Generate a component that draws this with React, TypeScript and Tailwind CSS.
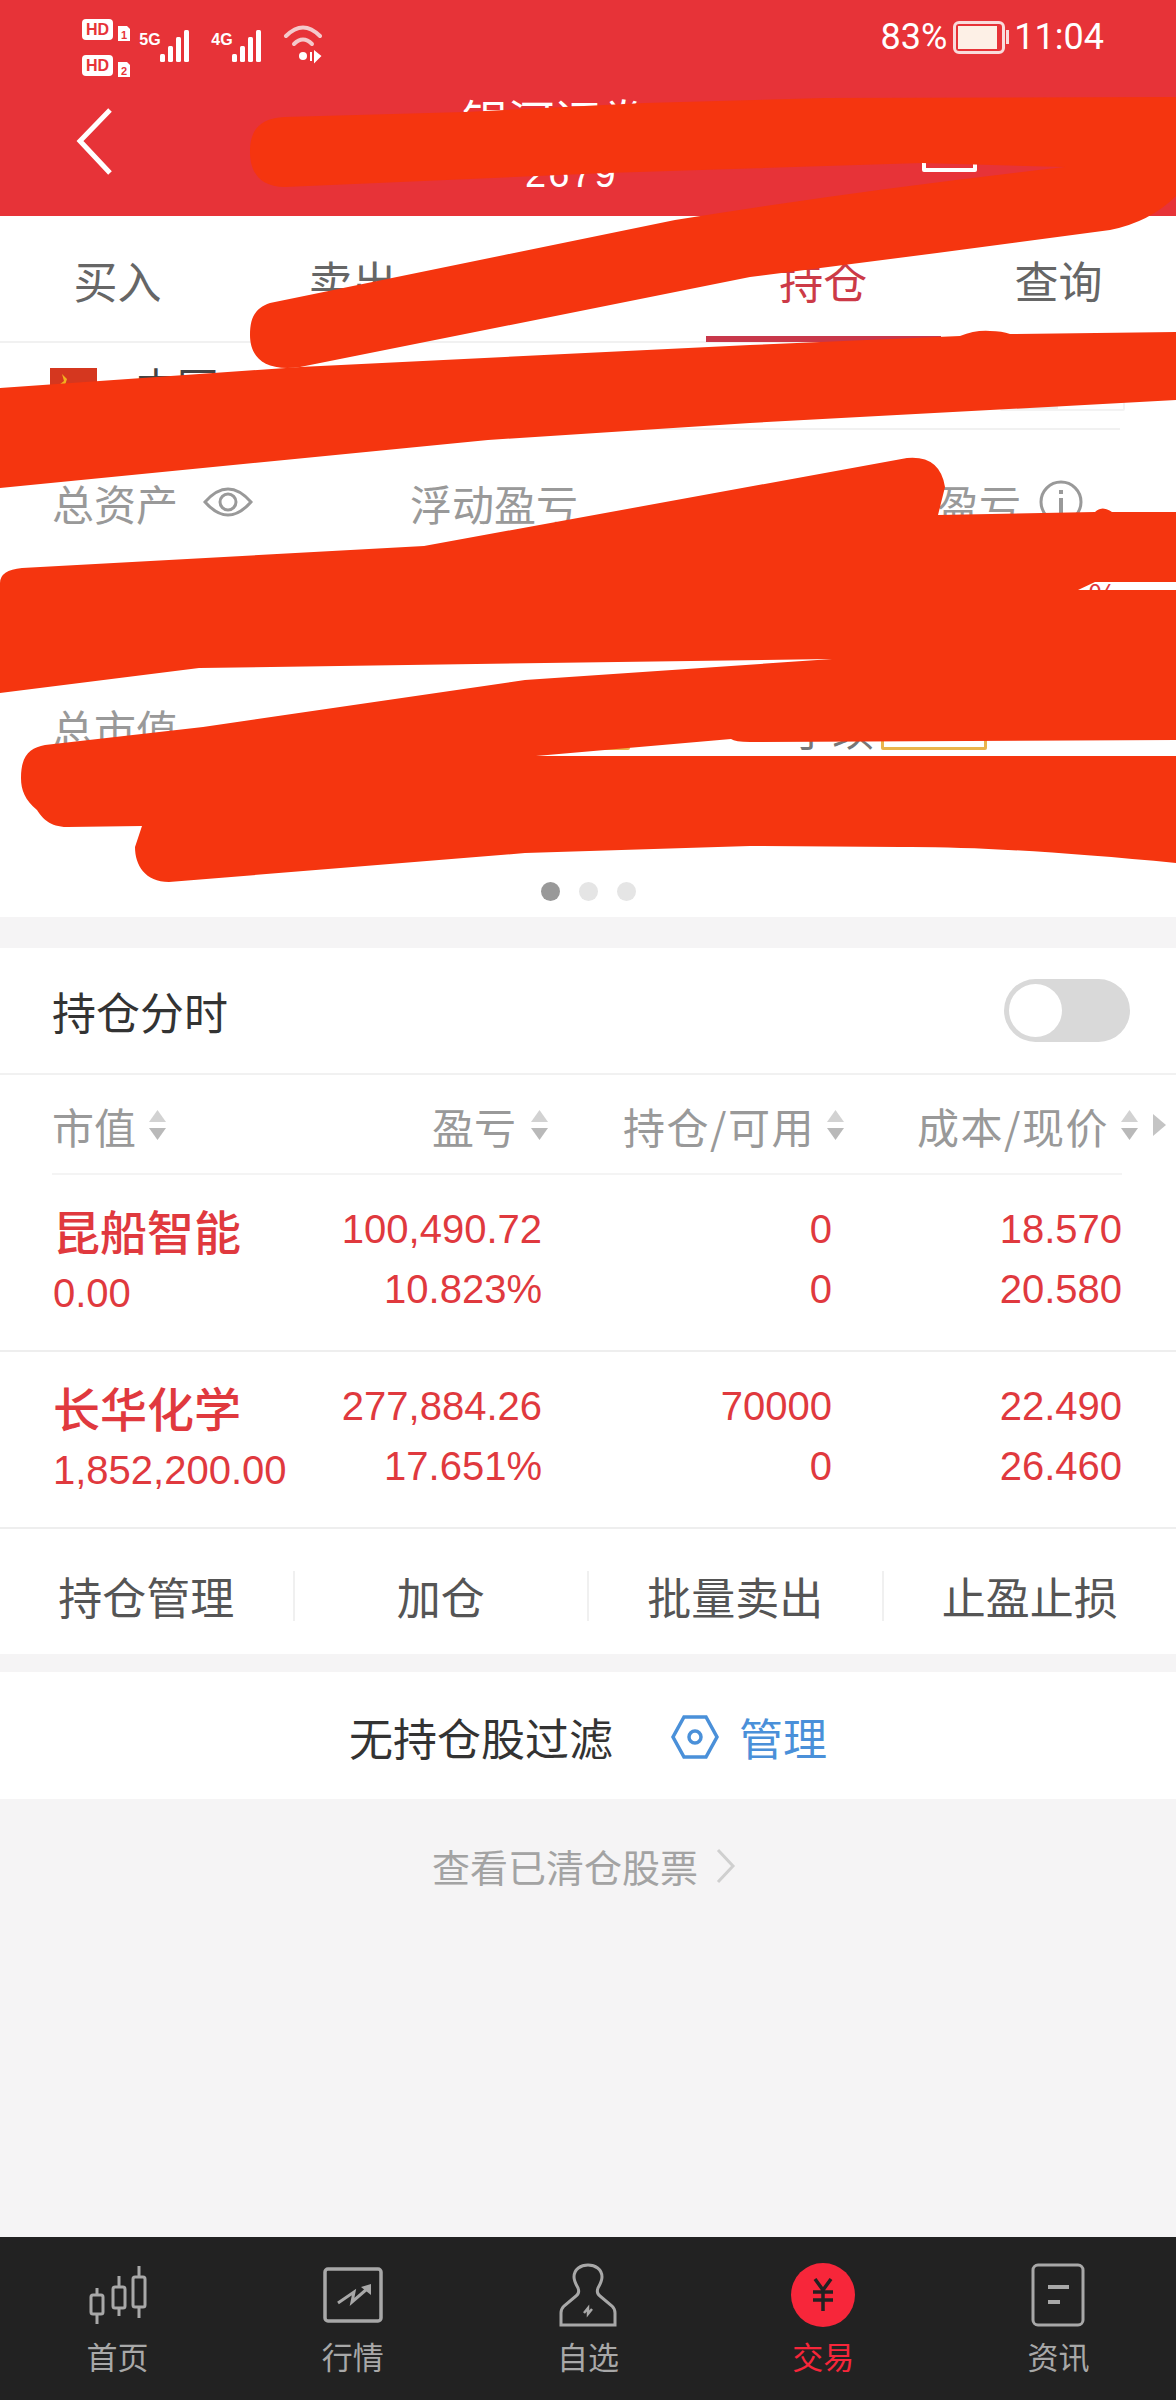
import React from 'react';

const FONT = '"Noto Sans CJK SC", sans-serif';
const NUM = '"Liberation Sans", "Noto Sans CJK SC", sans-serif';

const tabs = ['买入', '卖出', '撤单', '持仓', '查询'];

const stocks = [
  { name: '昆船智能', value: '0.00', pnl: '100,490.72', pct: '10.823%', hold: '0', avail: '0', cost: '18.570', price: '20.580' },
  { name: '长华化学', value: '1,852,200.00', pnl: '277,884.26', pct: '17.651%', hold: '70000', avail: '0', cost: '22.490', price: '26.460' },
];

function SortArrows() {
  return (
    <svg width="19" height="32" viewBox="0 0 19 32" className="shrink-0">
      <path d="M9.5 1 L18 13 H1 Z" fill="#d2d2d2" />
      <path d="M9.5 31 L18 19 H1 Z" fill="#b9b9b9" />
    </svg>
  );
}

function StatusIcons() {
  const bars = [
    [0, 8],
    [8, 16],
    [16, 25],
    [24, 32],
  ];
  return (
    <svg width="240" height="70" viewBox="0 0 240 70" className="shrink-0">
      <g fill="#fff">
        <rect x="0" y="0" width="31" height="21" rx="4" />
        <rect x="0" y="36" width="31" height="21" rx="4" />
        <path d="M36 7 H45 L48 10 V22 H36 Z" />
        <path d="M36 43 H45 L48 46 V58 H36 Z" />
      </g>
      <g fontFamily={NUM} fontWeight="700" textAnchor="middle">
        <text x="15.5" y="16" fontSize="16" fill="#e73338">HD</text>
        <text x="15.5" y="52" fontSize="16" fill="#e73338">HD</text>
        <text x="42" y="20" fontSize="11" fill="#e73338">1</text>
        <text x="42" y="56" fontSize="11" fill="#e73338">2</text>
        <text x="68" y="26" fontSize="16" fill="#fff">5G</text>
        <text x="140" y="26" fontSize="16" fill="#fff">4G</text>
      </g>
      {[78, 150].map((x) =>
        bars.map(([dx, h]) => (
          <rect key={`${x}-${dx}`} x={x + dx} y={43 - h} width="5" height={h} rx="1.5" fill="#fff" />
        )),
      )}
      <g fill="none" stroke="#f4c9cb" strokeWidth="4" strokeLinecap="round">
        <path d="M164 20 Q181 3 198 20" transform="translate(40 -3)" />
        <path d="M172 28 Q181 19 190 28" transform="translate(40 -3)" />
      </g>
      <circle cx="221" cy="37" r="4" fill="#fff" />
      <path d="M229 33 V42 M233 33 V42 L238 37 Z" stroke="#fff" strokeWidth="2" fill="#fff" />
    </svg>
  );
}

function Scribbles() {
  return (
    <svg className="absolute left-0 top-0 pointer-events-none" width="1176" height="900" viewBox="0 0 1176 900">
      <g fill="#f5350f">
        <path d="M285 117 L465 112 L645 103 L825 98 L1176 97 L1176 196 Q1150 222 1110 230 L937 253 L750 277 L300 367 C262 372 250 355 250 335 C250 318 255 308 270 303 L675 220 Q860 190 1065 167 L922 163 L607 173 L285 187 C258 187 250 170 250 152 C250 132 258 118 285 117 Z" />
        <path d="M0 388 L300 367 L750 345 L960 336 Q975 330 990 331 Q1002 331 1010 334 L1176 332 L1176 400 L750 423 L488 440 L0 488 Z" />
        <path d="M0 583 Q0 570 22 568 L424 546 L907 458 Q940 455 945 487 L938 515 L1095 512 Q1102 505 1112 512 L1176 512 L1176 582 L1095 582 L1078 590 L1176 590 L1176 740 L750 742 Q735 742 731 739 L536 756 L1176 756 L1176 863 Q1000 846 900 847 L750 846 L525 853 L169 882 C145 882 135 865 135 847 L142 826 L67 827 C50 827 42 818 37 810 C25 800 21 790 21 778 C21 755 30 748 45 745 L203 727 L525 680 L832 659 L199 668 L0 693 Z" />
      </g>
    </svg>
  );
}

function NavIcon({ index }: { index: number }) {
  const stroke = '#a8a8a8';
  if (index === 0) {
    return (
      <svg width="64" height="64" viewBox="0 0 64 64" fill="none" stroke={stroke} strokeWidth="3">
        <path d="M11 25 V61 M33 13 V53 M53 3 V55" />
        <rect x="5" y="32" width="12" height="19" rx="2" fill="#222" />
        <rect x="27" y="24" width="12" height="21" rx="2" fill="#222" />
        <rect x="47" y="14" width="12" height="30" rx="2" fill="#222" />
      </svg>
    );
  }
  if (index === 1) {
    return (
      <svg width="64" height="64" viewBox="0 0 64 64" fill="none" stroke={stroke}>
        <rect x="4" y="6" width="56" height="52" rx="3" strokeWidth="3.5" />
        <path d="M17 40 L33 29 L31 39 L46 26" strokeWidth="3" />
        <path d="M40 24 L50 21 V32 Z" fill={stroke} stroke="none" />
      </svg>
    );
  }
  if (index === 2) {
    return (
      <svg width="64" height="64" viewBox="0 0 64 64" fill="none" stroke={stroke} strokeWidth="3">
        <path d="M5 62 V50 Q5 46 8 43 L20 33 Q24 30 22 25 Q18 18 18 14 C18 6 25 2 32 2 C39 2 46 6 46 14 Q46 18 42 25 Q40 30 44 33 L56 43 Q59 46 59 50 V62 Z" />
        <path d="M28 50 L32 45 L32 51 L36 46" strokeWidth="2.5" />
      </svg>
    );
  }
  if (index === 3) {
    return (
      <div className="w-[64px] h-[64px] rounded-full bg-[#f7263a] flex items-center justify-center">
        <svg width="24" height="34" viewBox="0 0 24 34" fill="none" stroke="#222" strokeWidth="3.5">
          <path d="M4 1 L12 12 L20 1 M12 12 V33 M2 14 H22 M2 22 H22" />
        </svg>
      </div>
    );
  }
  return (
    <svg width="64" height="64" viewBox="0 0 64 64" fill="none" stroke={stroke} strokeWidth="3">
      <rect x="7" y="2" width="50" height="60" rx="5" />
      <path d="M22 24 H43 M22 39 H34" strokeWidth="4" />
    </svg>
  );
}

const navItems = ['首页', '行情', '自选', '交易', '资讯'];

export default function App() {
  return (
    <div className="relative w-[1176px] h-[2400px] flex flex-col bg-[#f5f4f5] overflow-hidden" style={{ fontFamily: FONT }}>
      {/* Red header */}
      <header className="h-[216px] shrink-0 bg-[#e73338] text-white flex flex-col">
        <div className="h-[90px] pl-[82px] pr-[72px] pt-[19px] flex items-start justify-between">
          <StatusIcons />
          <div className="flex items-center gap-[6px] -mt-[3px] font-['Roboto'] text-[36px] leading-[42px]">
            <span>83%</span>
            <div className="w-[52px] h-[33px] rounded-[6px] border-[3px] border-[#f9dcdc] p-[2px]">
              <div className="w-[92%] h-full bg-[#fdf0e6]" />
            </div>
            <div className="w-[3px] h-[14px] bg-[#f9dcdc] -ml-[5px] -mr-[1px]" />
            <span>11:04</span>
          </div>
        </div>
        <div className="flex items-start h-[126px]">
          <svg width="40" height="70" viewBox="0 0 40 70" className="ml-[74px] mt-[17px] shrink-0" fill="none" stroke="#fff" strokeWidth="5">
            <path d="M36 3 L6 34 L36 66" />
          </svg>
          <div className="ml-[348px] w-[200px] flex flex-col shrink-0">
            <span className="text-[46px] leading-[60px] -mt-[2px]">银河证券</span>
            <span className="text-[38px] leading-[40px] ml-[63px] mt-[6px] font-['Liberation_Sans'] tracking-[2px]">2679</span>
          </div>
          <div className="ml-[260px] mt-[36px] w-[55px] h-[46px] border-[4px] border-white rounded-[2px] shrink-0" />
        </div>
      </header>

      {/* Tabs */}
      <nav className="h-[127px] shrink-0 bg-white border-b-2 border-[#f1f1f1] flex">
        {tabs.map((tab) => (
          <div key={tab} className="relative flex-1 flex items-center justify-center pt-[2px]">
            <span className={`text-[44px] ${tab === '持仓' ? 'text-[#cc3a47]' : 'text-[#666]'}`}>{tab}</span>
            {tab === '持仓' && <div className="absolute bottom-[-1px] left-0 right-0 h-[6px] bg-[#c8374a]" />}
          </div>
        ))}
      </nav>

      {/* Account */}
      <div className="h-[85px] shrink-0 bg-white pl-[50px] pr-[51px] flex items-center">
        <svg width="47" height="36" viewBox="0 0 47 36" className="shrink-0">
          <rect width="47" height="36" fill="#d5371f" />
          <path d="M12 6 L14 13 L9 17 L15 17 L17 11 Z" fill="#f2b01e" />
        </svg>
        <span className="ml-[38px] text-[42px] text-[#444]">中国</span>
        <div className="ml-auto w-[125px] h-[50px] border-2 border-[#f3f3f3] rounded-[2px] flex">
          <div className="w-[56px] bg-[#eeeeee]" />
        </div>
      </div>

      {/* Asset summary */}
      <section className="h-[489px] shrink-0 bg-white relative flex flex-col">
        <div className="mr-[56px] border-t-2 border-[#f1f1f1]" />
        <div className="flex items-center h-[74px] mt-[35px] pl-[52px] text-[42px] text-[#999]">
          <div className="w-[358px] flex items-center gap-[25px]">
            <span>总资产</span>
            <svg width="50" height="36" viewBox="0 0 50 36" fill="none" stroke="#999" strokeWidth="3">
              <path d="M2 18 Q25 -8 48 18 Q25 44 2 18 Z" />
              <circle cx="25" cy="18" r="8" />
            </svg>
          </div>
          <span className="w-[443px]">浮动盈亏</span>
          <span>当日盈亏</span>
          <svg width="44" height="44" viewBox="0 0 44 44" fill="none" stroke="#999" strokeWidth="3" className="ml-[18px]">
            <circle cx="22" cy="22" r="20" />
            <path d="M22 18 V33 M22 10 V14" strokeWidth="4" />
          </svg>
        </div>
        <div className="flex justify-end pr-[58px] mt-[35px] text-[32px] leading-[40px] text-[#e0393e]">%</div>
        <div className="flex items-center h-[60px] mt-[83px] pl-[52px] text-[42px] text-[#999]">
          <span className="w-[738px]">总市值</span>
          <span className="text-[#777]">手续</span>
        </div>
        <div className="absolute left-[520px] top-[268px] w-[110px] h-[54px] border-[3px] border-[#e9b44c] rounded-[2px]" />
        <div className="absolute left-[881px] top-[268px] w-[106px] h-[54px] border-[3px] border-[#e9b44c] rounded-[2px]" />
        <div className="mt-auto mb-[16px] flex justify-center gap-[19px]">
          <div className="w-[19px] h-[19px] rounded-full bg-[#999]" />
          <div className="w-[19px] h-[19px] rounded-full bg-[#e5e5e5]" />
          <div className="w-[19px] h-[19px] rounded-full bg-[#e5e5e5]" />
        </div>
      </section>

      {/* Positions */}
      <section className="mt-[31px] shrink-0 bg-white">
        <div className="h-[127px] pl-[52px] pr-[46px] border-b-2 border-[#f1f1f1] flex items-center justify-between">
          <span className="text-[44px] text-[#333]">持仓分时</span>
          <div className="w-[126px] h-[63px] rounded-full bg-[#d9d9d9] p-[5px]">
            <div className="w-[53px] h-[53px] rounded-full bg-white" />
          </div>
        </div>

        <div className="relative h-[100px] pl-[52px] text-[42px] text-[#999] flex items-center">
          <div className="w-[380px] flex items-center gap-[12px]">
            <span>市值</span>
            <SortArrows />
          </div>
          <div className="w-[191px] flex items-center gap-[14px]">
            <span>盈亏</span>
            <SortArrows />
          </div>
          <div className="w-[294px] flex items-center gap-[11px]">
            <span className="tracking-[1.5px]">持仓/可用</span>
            <SortArrows />
          </div>
          <div className="flex items-center gap-[11px]">
            <span className="tracking-[1.5px]">成本/现价</span>
            <SortArrows />
          </div>
          <div className="absolute left-[1153px] w-0 h-0 border-y-[11px] border-y-transparent border-l-[13px] border-l-[#c4c4c4]" />
          <div className="absolute left-[52px] right-[54px] bottom-0 h-[2px] bg-[#f4f4f4]" />
        </div>

        {stocks.map((s) => (
          <div key={s.name} className="h-[177px] border-b-2 border-[#eeeeee] pl-[53px] pr-[54px] grid grid-cols-[247px_242px_290px_290px] content-center text-[#e0393e] text-[40px] leading-[60px]" style={{ fontFamily: NUM }}>
            <div className="flex flex-col">
              <span className="text-[47px] leading-[60px] -mt-[3px] font-medium" style={{ fontFamily: FONT }}>{s.name}</span>
              <span className="leading-[60px] mt-[3px]">{s.value}</span>
            </div>
            <div className="text-right -mt-[4px]">
              <div>{s.pnl}</div>
              <div>{s.pct}</div>
            </div>
            <div className="text-right -mt-[4px]">
              <div>{s.hold}</div>
              <div>{s.avail}</div>
            </div>
            <div className="text-right -mt-[4px]">
              <div>{s.cost}</div>
              <div>{s.price}</div>
            </div>
          </div>
        ))}

        <div className="h-[125px] pt-[8px] flex items-center text-[44px] text-[#555]">
          {['持仓管理', '加仓', '批量卖出', '止盈止损'].map((label, i) => (
            <div key={label} className={`flex-1 h-[50px] flex items-center justify-center ${i < 3 ? 'border-r-2 border-[#f0f0f0]' : ''}`}>
              {label}
            </div>
          ))}
        </div>
      </section>

      {/* Filter */}
      <div className="mt-[18px] h-[127px] shrink-0 bg-white flex items-center justify-center text-[44px] pt-[2px]">
        <span className="text-[#333]">无持仓股过滤</span>
        <svg width="48" height="44" viewBox="0 0 48 44" fill="none" stroke="#4a90d9" strokeWidth="3.5" className="ml-[58px]">
          <path d="M13 2 H35 L46 22 L35 42 H13 L2 22 Z" />
          <circle cx="24" cy="22" r="6" />
        </svg>
        <span className="ml-[20px] text-[#4a90d9]">管理</span>
      </div>

      {/* Closed positions */}
      <div className="mt-[39px] flex items-center justify-center text-[38px] leading-[56px] text-[#a3a3a3] pr-[8px]">
        <span>查看已清仓股票</span>
        <svg width="20" height="36" viewBox="0 0 20 36" fill="none" stroke="#cfcfcf" strokeWidth="3" className="ml-[18px]">
          <path d="M2 2 L17 18 L2 34" />
        </svg>
      </div>

      {/* Bottom nav */}
      <footer className="mt-auto h-[163px] shrink-0 bg-[#222] flex">
        {navItems.map((label, i) => (
          <div key={label} className="flex-1 flex flex-col items-center pt-[26px]">
            <NavIcon index={i} />
            <span className={`mt-[9px] text-[31px] leading-[40px] ${i === 3 ? 'text-[#f7263a]' : 'text-[#a8a8a8]'}`}>{label}</span>
          </div>
        ))}
      </footer>

      <Scribbles />
    </div>
  );
}
